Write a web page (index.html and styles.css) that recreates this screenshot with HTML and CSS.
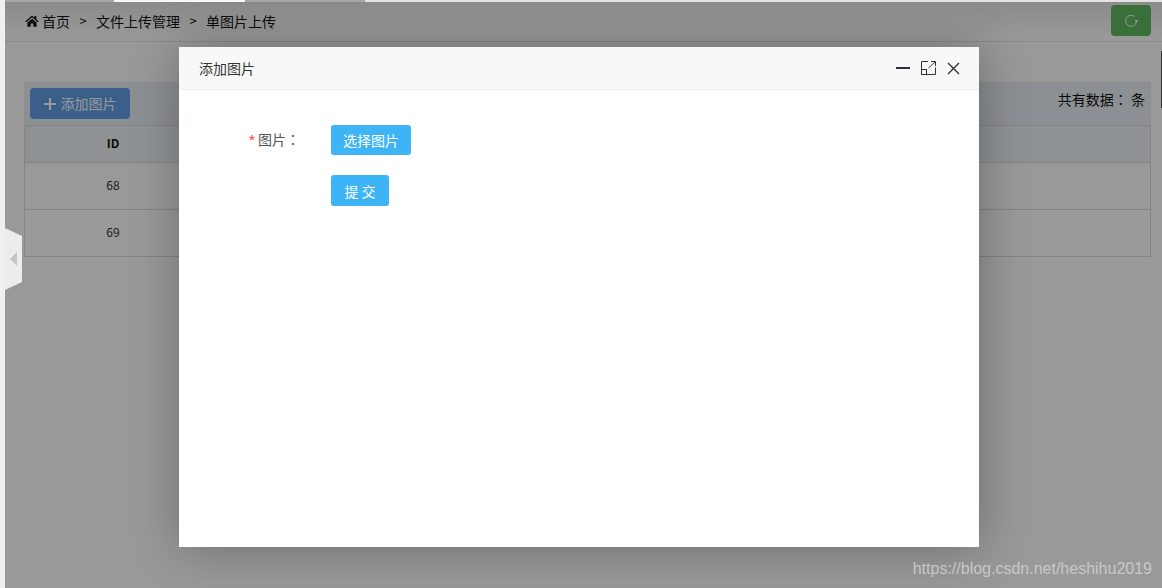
FILE: index.html
```html
<!DOCTYPE html>
<html lang="zh-CN">
<head>
    <meta charset="UTF-8">
    <title>单图片上传</title>
    <link rel="stylesheet" href="styles.css">
</head>
<body>
    <div class="page">
        <div class="side-strip"></div>
        <div class="main">
            <div class="tab-line">
                <span class="tab tab-a"></span>
                <span class="tab tab-active"></span>
                <span class="tab tab-b"></span>
            </div>
            <div class="topbar">
                <div class="crumbs">
                    <svg class="home-icon" viewBox="0 0 14 12" width="14" height="12"><path d="M7 0.5 L0.3 6.3 L1.2 7.2 L7 2.3 L12.8 7.2 L13.7 6.3 L11.3 4.2 V1 H9.6 V2.7 Z M2.4 7.6 V11.8 H5.7 V8.4 H8.3 V11.8 H11.6 V7.6 L7 3.7 Z" fill="#111"/></svg>
                    <span>首页</span>
                    <span class="sep">&gt;</span>
                    <span>文件上传管理</span>
                    <span class="sep">&gt;</span>
                    <span>单图片上传</span>
                </div>
                <button class="refresh-btn">
                    <svg viewBox="0 0 15 14" width="15" height="14"><path d="M10.5 2.6 A5.5 5.5 0 1 0 12.4 8" fill="none" stroke="#fff" stroke-width="1"/><path d="M10.4 6 H14.4 L12.4 8.4 Z" fill="#fff"/></svg>
                </button>
            </div>
            <div class="content">
                <div class="toolbar">
                    <button class="add-btn">
                        <svg viewBox="0 0 12 12" width="12" height="12"><path d="M5 0 H7 V5 H12 V7 H7 V12 H5 V7 H0 V5 H5 Z" fill="#fff"/></svg>
                        添加图片
                    </button>
                    <div class="total">共有数据<span class="colon" lang="zh-Hant">：</span> 条</div>
                </div>
                <table class="list">
                    <tr><th class="col-id">ID</th><th></th></tr>
                    <tr><td>68</td><td></td></tr>
                    <tr><td>69</td><td></td></tr>
                </table>
            </div>
        </div>
    </div>

    <div class="shade"></div>

    <div class="scroll-mark"></div>

    <div class="toggler"><span class="toggler-arrow"></span></div>

    <div class="dialog">
        <div class="dialog-head">
            <span>添加图片</span>
            <div class="dialog-tools">
                <span class="min-icon"></span>
                <svg viewBox="0 0 15 14" width="15" height="14"><path d="M0.5 8 V0.5 H7 M14.5 6.5 V13.5 H5.5 M7.5 7 L14 1 M10 0.5 H14.5 V5" fill="none" stroke="#333" stroke-width="1"/><rect x="0.5" y="8.5" width="5" height="5" fill="none" stroke="#333"/></svg>
                <svg viewBox="0 0 13 13" width="13" height="13"><path d="M1 1 L12 12 M12 1 L1 12" stroke="#333" stroke-width="1.4" fill="none"/></svg>
            </div>
        </div>
        <form class="dialog-form">
            <div class="form-row">
                <label class="form-label"><i>*</i> 图片<span class="colon" lang="zh-Hant">：</span></label>
                <button type="button" class="blue-btn">选择图片</button>
            </div>
            <div class="form-row">
                <span class="form-label"></span>
                <button type="button" class="blue-btn submit-btn">提 交</button>
            </div>
        </form>
    </div>

    <div class="watermark">https://blog.csdn.net/heshihu2019</div>
</body>
</html>
```

FILE: styles.css
```css
* {
    box-sizing: border-box;
}
html, body {
    height: 100%;
}
body {
    margin: 0;
    overflow: hidden;
    background-color: #fff;
    color: #222;
    font-family: "Noto Sans CJK SC", "Liberation Sans", sans-serif;
    font-size: 14px;
    text-spacing-trim: space-all;
}
.colon {
    font-family: "Noto Sans CJK TC", sans-serif;
}
.page {
    display: flex;
    height: 588px;
}
.side-strip {
    width: 5px;
    background-color: #f0f0f0;
    position: relative;
    z-index: 2;
}
.main {
    flex: 1;
    min-width: 0;
}
.tab-line {
    display: flex;
    height: 2px;
    background-color: #e4e4e4;
    position: relative;
    z-index: 2;
}
.tab {
    display: block;
    height: 2px;
}
.tab-a {
    width: 109px;
    background-color: #a6a6a6;
}
.tab-active {
    width: 131px;
    background-color: #f8f8f8;
}
.tab-b {
    width: 120px;
    background-color: #a6a6a6;
}
.topbar {
    display: flex;
    justify-content: space-between;
    align-items: center;
    height: 40px;
    padding: 0 11px 2px 20px;
    border-bottom: 1px solid #e6e6e6;
    background: linear-gradient(#e8e8e8, #fff 90%);
}
.crumbs {
    display: flex;
    align-items: center;
    line-height: 20px;
    color: #111;
}
.home-icon {
    margin-right: 3px;
}
.sep {
    width: 26px;
    text-align: center;
    font-size: 13px;
}
.refresh-btn {
    display: flex;
    align-items: center;
    justify-content: center;
    width: 40px;
    height: 31px;
    padding: 0;
    border: none;
    border-radius: 4px;
    background-color: #5fb95f;
}
.content {
    padding: 40px 11px 0 19px;
}
.toolbar {
    display: flex;
    justify-content: space-between;
    align-items: flex-start;
    height: 43px;
    padding: 5px 5px 0 5px;
    border: 1px solid #e9edf0;
    border-bottom: none;
    background-color: #e9f1f7;
}
.add-btn {
    display: flex;
    align-items: center;
    justify-content: center;
    gap: 5px;
    height: 31px;
    width: 100px;
    padding: 0;
    border: none;
    border-radius: 4px;
    background-color: #5f9fe6;
    color: #fff;
    font-family: inherit;
    font-size: 14px;
    line-height: 29px;
}
.total {
    line-height: 20px;
    margin-top: 1px;
    color: #111;
}
.list {
    width: 100%;
    border-collapse: collapse;
    table-layout: fixed;
}
.list th, .list td {
    border: 1px solid #ddd;
    padding: 0 0 4px;
    text-align: center;
    font-size: 12px;
    color: #333;
}
.list th {
    height: 37px;
    background-color: #eef3f7;
    font-weight: bold;
    color: #111;
}
.list td {
    height: 47px;
    background-color: #fff;
}
.col-id {
    width: 177px;
}
.shade {
    position: absolute;
    top: 0;
    left: 5px;
    right: 0;
    bottom: 0;
    background-color: rgba(0, 0, 0, 0.4);
}
.scroll-mark {
    position: absolute;
    right: 0;
    top: 51px;
    width: 1px;
    height: 57px;
    background-color: #333;
}
.toggler {
    position: absolute;
    left: 5px;
    top: 228px;
    display: flex;
    align-items: center;
    width: 17px;
    height: 62px;
    padding-left: 5px;
    background-color: #ececec;
    clip-path: polygon(0 0, 100% 8px, 100% 54px, 0 100%);
}
.toggler-arrow {
    width: 0;
    height: 0;
    border-top: 7px solid transparent;
    border-bottom: 7px solid transparent;
    border-right: 7px solid #c4c4c4;
}
.dialog {
    position: absolute;
    left: 179px;
    top: 47px;
    width: 800px;
    height: 500px;
    background-color: #fff;
    border-radius: 2px 2px 0 0;
    box-shadow: 1px 1px 50px rgba(0, 0, 0, 0.3);
}
.dialog-head {
    display: flex;
    justify-content: space-between;
    align-items: center;
    height: 43px;
    padding: 0 19px 0 20px;
    border-bottom: 1px solid #eee;
    background-color: #f8f8f8;
    color: #333;
}
.dialog-tools {
    display: flex;
    align-items: center;
    gap: 11px;
}
.min-icon {
    display: block;
    width: 14px;
    height: 2px;
    background-color: #2e2d3c;
}
.dialog-form {
    padding: 35px 0 0;
}
.form-row {
    display: flex;
    align-items: center;
    margin-bottom: 20px;
}
.form-label {
    width: 152px;
    height: 30px;
    padding-right: 31px;
    text-align: right;
    line-height: 28px;
    font-size: 14px;
    color: #555;
}
.form-label i {
    font-family: "Liberation Sans", sans-serif;
    font-style: normal;
    font-size: 15px;
    color: #f33;
}
.blue-btn {
    height: 30px;
    width: 80px;
    padding: 0;
    border: none;
    border-radius: 3px;
    background-color: #3cb4f5;
    color: #fff;
    font-family: inherit;
    font-size: 14px;
    line-height: 28px;
}
.submit-btn {
    width: 58px;
    height: 31px;
}
.watermark {
    position: absolute;
    right: 10px;
    bottom: 9px;
    color: #c8c8c8;
    font-family: "Liberation Sans", sans-serif;
    font-size: 16px;
    line-height: 20px;
}
```
